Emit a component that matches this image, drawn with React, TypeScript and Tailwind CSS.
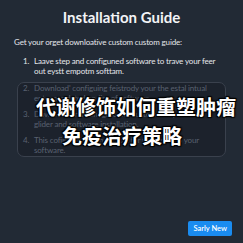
const steps = [
  {
    n: "2.",
    lines: ["Download' configuing feistrody your the estal intual", "enter aupdated on fire of software."],
  },
  {
    n: "3.",
    lines: ["Download and configure the custom setup", "glider and software installation."],
  },
  {
    n: "4.",
    lines: ["This cofiguration runs stable for the desktop your", "software."],
  },
];

const App = () => {
  return (
    <div className="relative flex h-[243px] w-[243px] flex-col overflow-hidden bg-[#222a35] font-['Lato','Noto_Sans',sans-serif] text-white">
      <h1 className="pt-[6px] text-center text-[15px] leading-[22px] font-bold text-[#f3f4f6]">
        Installation Guide
      </h1>
      <p className="mt-[8px] px-[14px] text-[8px] leading-[12px] tracking-[-0.15px] text-[#e5e7eb]">
        Get your orget downloative custom custom guide:
      </p>

      <div className="mt-[9px] flex gap-[1px] pr-[20px] pl-[23px] text-[8px] leading-[9.5px] tracking-[-0.15px] text-[#e5e7eb]">
        <span className="w-[10px] shrink-0">1.</span>
        <span>Laave step and configuned software to trave your feer out eystt empotm softtam.</span>
      </div>

      <div className="mx-[17px] mt-[6px] flex flex-col gap-[7px] rounded-[7px] border border-[#3a414d] bg-[#1c222c] pt-[1px] pr-[6px] pb-[1px] pl-[5px] text-[8px] leading-[9.5px] tracking-[-0.15px] text-[#596170]">
        {steps.map((s) => (
          <div key={s.n} className="flex gap-[1px]">
            <span className="w-[10px] shrink-0">{s.n}</span>
            <span className="whitespace-nowrap">
              {s.lines[0]}
              <br />
              {s.lines[1]}
            </span>
          </div>
        ))}
      </div>

      <div className="mt-auto flex justify-end pr-[11px] pb-[7px]">
        <button className="rounded-[2px] bg-[#1a8cf0] px-[5px] py-[2px] text-[7.5px] leading-[11px] font-semibold text-white">
          Sarly New
        </button>
      </div>

      <div className="absolute top-[92px] left-[36px] w-[172px] text-center font-['Noto_Sans_CJK_SC',sans-serif] text-[20px] leading-[29px] font-bold whitespace-nowrap text-white [text-shadow:0_0_2px_#000,1px_1px_1px_#000,-1px_-1px_1px_#000,1px_-1px_1px_#000,-1px_1px_1px_#000]">
        <div>代谢修饰如何重塑肿瘤</div>
        <div>免疫治疗策略</div>
      </div>
    </div>
  );
};

export default App;
